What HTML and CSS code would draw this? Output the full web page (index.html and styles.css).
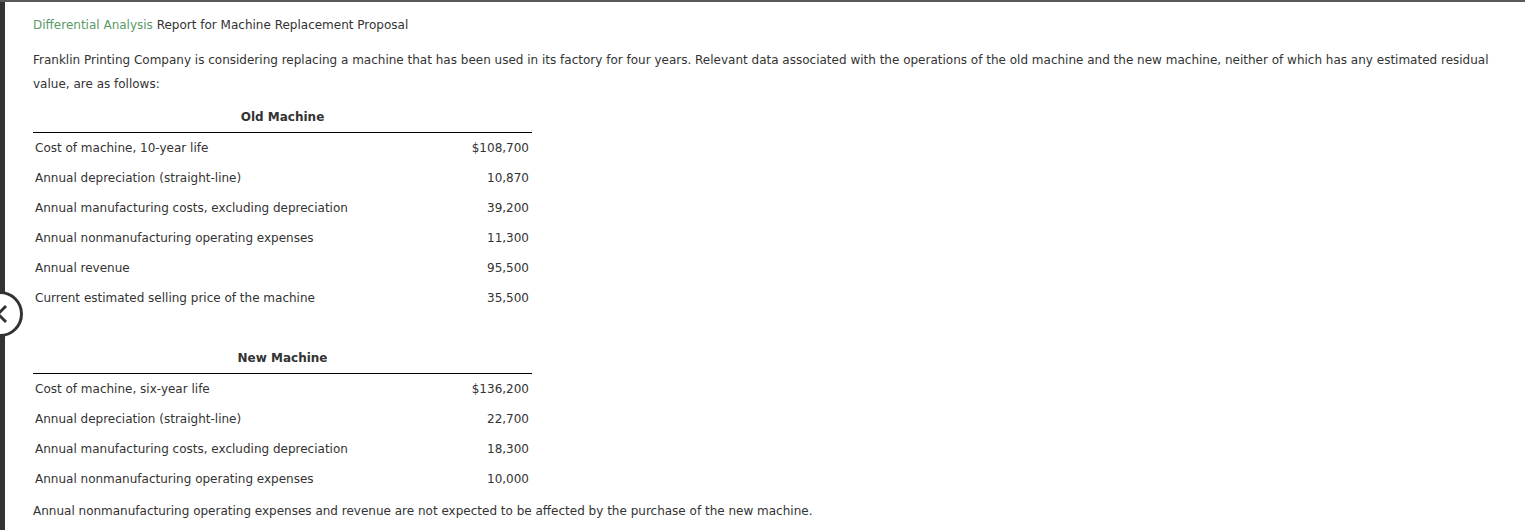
FILE: index.html
```html
<!DOCTYPE html>
<html>
<head>
<meta charset="utf-8">
<link rel="stylesheet" href="styles.css">
</head>
<body>
<div class="frame">
  <div class="strip"></div>
  <button class="back" aria-label="Back">
    <svg width="12" height="20" viewBox="0 0 12 20"><path d="M9 2 L1 10 L9 18" fill="none" stroke="#333" stroke-width="3"/></svg>
  </button>
  <main class="content">
    <p class="title"><span class="accent">Differential Analysis</span> Report for Machine Replacement Proposal</p>
    <p class="intro">Franklin Printing Company is considering replacing a machine that has been used in its factory for four years. Relevant data associated with the operations of the old machine and the new machine, neither of which has any estimated residual value, are as follows:</p>
    <table class="data">
      <thead><tr><th colspan="2">Old Machine</th></tr></thead>
      <tbody>
        <tr><td>Cost of machine, 10-year life</td><td class="num">$108,700</td></tr>
        <tr><td>Annual depreciation (straight-line)</td><td class="num">10,870</td></tr>
        <tr><td>Annual manufacturing costs, excluding depreciation</td><td class="num">39,200</td></tr>
        <tr><td>Annual nonmanufacturing operating expenses</td><td class="num">11,300</td></tr>
        <tr><td>Annual revenue</td><td class="num">95,500</td></tr>
        <tr><td>Current estimated selling price of the machine</td><td class="num">35,500</td></tr>
      </tbody>
    </table>
    <table class="data second">
      <thead><tr><th colspan="2">New Machine</th></tr></thead>
      <tbody>
        <tr><td>Cost of machine, six-year life</td><td class="num">$136,200</td></tr>
        <tr><td>Annual depreciation (straight-line)</td><td class="num">22,700</td></tr>
        <tr><td>Annual manufacturing costs, excluding depreciation</td><td class="num">18,300</td></tr>
        <tr><td>Annual nonmanufacturing operating expenses</td><td class="num">10,000</td></tr>
      </tbody>
    </table>
    <p class="note">Annual nonmanufacturing operating expenses and revenue are not expected to be affected by the purchase of the new machine.</p>
  </main>
</div>
</body>
</html>
```

FILE: styles.css
```css
html, body {
  margin: 0;
  padding: 0;
  background: #fff;
}
body {
  font-family: "DejaVu Sans", Verdana, sans-serif;
  font-size: 12px;
  color: #333;
  height: 530px;
  overflow: hidden;
}
.frame {
  position: relative;
  display: flex;
  height: 528px;
  border-top: 2px solid #5a5a5a;
}
.strip {
  width: 5px;
  flex: none;
  background: #333;
}
.back {
  position: absolute;
  left: -23px;
  top: 289px;
  width: 46px;
  height: 46px;
  border: 3px solid #333;
  border-radius: 50%;
  background: #fff;
  padding: 0 0 0 22px;
  display: flex;
  align-items: center;
}
.back svg {
  display: block;
  margin-left: -5px;
}
.content {
  padding: 11px 0 0 28px;
  width: 1470px;
}
.title {
  margin: 0;
  line-height: 24px;
}
.accent {
  color: #5b9a68;
}
.intro {
  margin: 11px 0 0;
  line-height: 24px;
}
.data {
  border-collapse: collapse;
  width: 499px;
  margin-top: 14px;
}
.data th {
  font-weight: bold;
  text-align: center;
  line-height: 14px;
  padding: 0 0 8px;
  border-bottom: 1px solid #000;
}
.data td {
  height: 30px;
  padding: 0 0 0 2px;
  line-height: 14px;
  vertical-align: middle;
}
.data td.num {
  text-align: right;
  padding: 0 3px 0 0;
}
.second {
  margin-top: 38px;
}
.note {
  margin: 5px 0 0;
  line-height: 24px;
}
```
